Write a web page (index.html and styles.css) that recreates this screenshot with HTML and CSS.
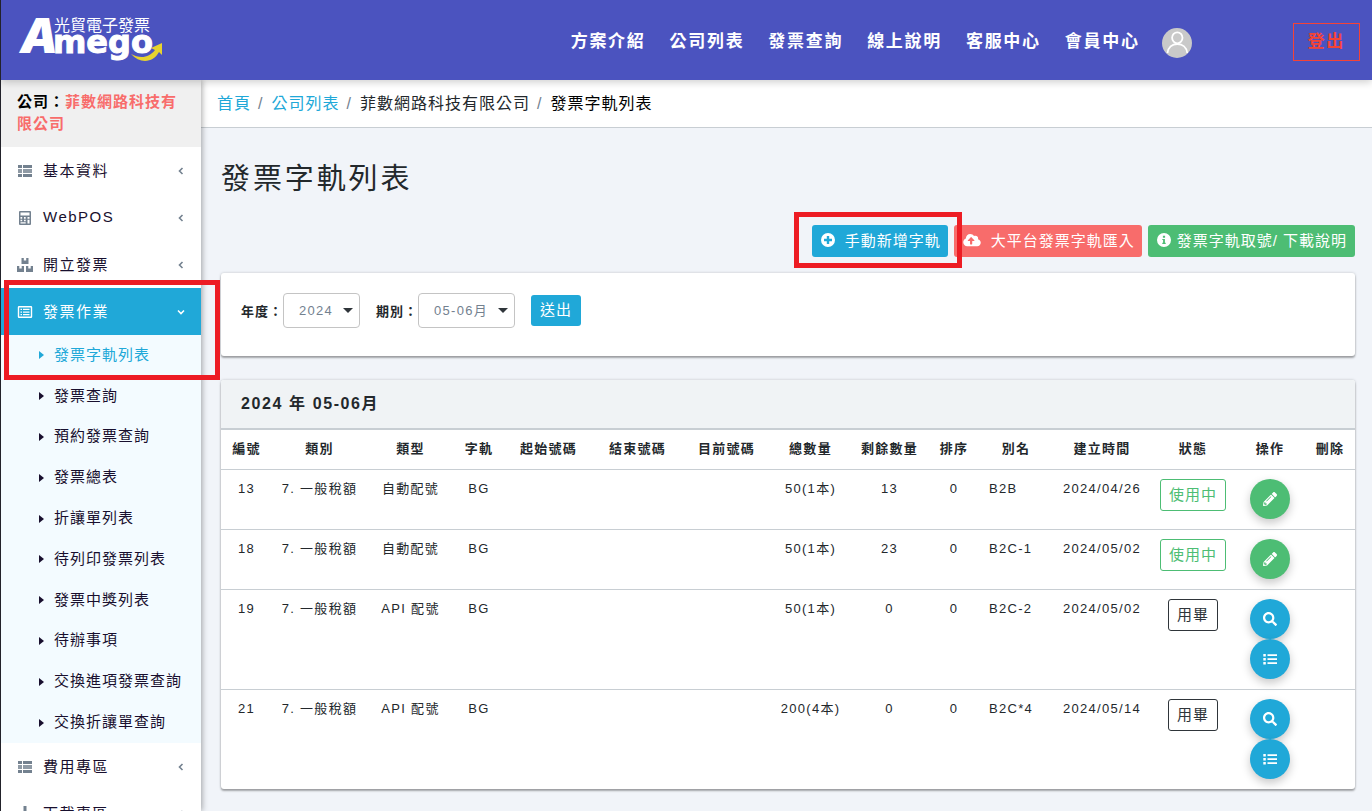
FILE: index.html
```html
<!DOCTYPE html>
<html lang="zh-Hant">
<head>
<meta charset="utf-8">
<meta name="viewport" content="width=device-width, initial-scale=1">
<title>發票字軌列表</title>
<link rel="stylesheet" href="styles.css">
</head>
<body>
<svg class="sprite" aria-hidden="true">
  <symbol id="i-rows" viewBox="0 0 16 16"><path d="M1 2h4v3H1zM6 2h9v3H6zM1 11h4v3H1zM6 11h9v3H6z"/><path d="M1 6h4v4H1zM6 6h9v4H6z" opacity=".8"/></symbol>
  <symbol id="i-calc" viewBox="0 0 16 16"><path fill-rule="evenodd" d="M3 1h10a1 1 0 0 1 1 1v12a1 1 0 0 1-1 1H3a1 1 0 0 1-1-1V2a1 1 0 0 1 1-1zM3.500 2.500v3h9v-3zM3.500 7v1.700h1.700V7zM7 7v1.700h1.700V7zM10.500 7v1.700h2V7zM3.500 9.700v1.500h1.700V9.700zM7 9.700v1.500h1.700V9.700zM3.500 12.200v1.300h5.200v-1.300zM10.500 9.700v3.800h2V9.700z"/></symbol>
  <symbol id="i-boxes" viewBox="0 0 16 16"><path d="M4.500 1h2.300v2.500h2.400V1h2.300v6h-7zM0 9h2.300v2.500h2.400V9H7v6H0zM9 9h2.300v2.500h2.400V9H16v6H9z"/></symbol>
  <symbol id="i-listalt" viewBox="0 0 16 16"><path fill-rule="evenodd" d="M2 2h12a1.200 1.200 0 0 1 1.200 1.200v9.600A1.200 1.200 0 0 1 14 14H2a1.200 1.200 0 0 1-1.200-1.200V3.200A1.200 1.200 0 0 1 2 2zM2.200 3.400v9.200h11.600V3.400zM3.500 4.700H5V6H3.500zM6 4.700h6.500V6H6zM3.500 7.400H5v1.300H3.500zM6 7.400h6.500v1.300H6zM3.500 10H5v1.300H3.500zM6 10h6.500v1.300H6z"/></symbol>
  <symbol id="i-download" viewBox="0 0 16 16"><path d="M6.500 0h3v6H13l-5 5-5-5h3.500zM0 11h4l4 3 4-3h4v5H0z"/></symbol>
  <symbol id="i-pencil" viewBox="0 0 512 512"><path d="M497.900 142.100l-46.100 46.100c-4.700 4.700-12.300 4.700-17 0l-111-111c-4.700-4.700-4.700-12.300 0-17l46.100-46.100c18.700-18.700 49.100-18.700 67.900 0l60.100 60.100c18.800 18.700 18.800 49.100 0 67.900zM284.200 99.800L21.600 362.400.4 483.900c-2.900 16.400 11.400 30.600 27.800 27.800l121.500-21.300 262.600-262.600c4.700-4.700 4.700-12.300 0-17l-111-111c-4.800-4.700-12.400-4.700-17.100 0zM124.100 339.900c-5.500-5.500-5.500-14.300 0-19.800l154-154c5.500-5.500 14.300-5.500 19.800 0s5.500 14.300 0 19.800l-154 154c-5.500 5.500-14.300 5.500-19.800 0zM88 424h48v36.300l-64.500 11.300-31.100-31.100L51.700 376H88v48z"/></symbol>
  <symbol id="i-search" viewBox="0 0 512 512"><path d="M505 442.700L405.300 343c-4.500-4.500-10.600-7-17-7H372c27.600-35.300 44-79.700 44-128C416 93.100 322.900 0 208 0S0 93.100 0 208s93.100 208 208 208c48.300 0 92.700-16.400 128-44v16.300c0 6.400 2.500 12.500 7 17l99.700 99.700c9.400 9.400 24.600 9.400 33.900 0l28.300-28.300c9.400-9.400 9.400-24.600.1-34zM208 336c-70.700 0-128-57.200-128-128 0-70.700 57.200-128 128-128 70.700 0 128 57.200 128 128 0 70.700-57.200 128-128 128z"/></symbol>
  <symbol id="i-list" viewBox="0 0 14 14"><path d="M.3 2h2.500v2.500H.3zM.3 6h2.500v2.500H.3zM.3 10h2.500v2.500H.3zM4.500 2.300H14v1.800H4.500zM4.500 6.300H14v1.800H4.500zM4.500 10.300H14v1.800H4.500z"/></symbol>
  <symbol id="i-plus" viewBox="0 0 14 14"><path fill-rule="evenodd" d="M7 0a7 7 0 1 1 0 14A7 7 0 0 1 7 0zM5.800 3v2.800H3v2.400h2.800V11h2.400V8.200H11V5.800H8.200V3z"/></symbol>
  <symbol id="i-info" viewBox="0 0 14 14"><path fill-rule="evenodd" d="M7 0a7 7 0 1 1 0 14A7 7 0 0 1 7 0zM5.900 2.700v2.100h2.200V2.700zM5.300 5.900v1.200h.8v2.600h-.8v1.200h3.400V9.700h-.8V5.900z"/></symbol>
  <symbol id="i-cloud" viewBox="0 0 640 512"><path d="M537.600 226.600c4.100-10.700 6.400-22.400 6.400-34.600 0-53-43-96-96-96-19.700 0-38.100 6-53.300 16.200C367 64.200 315.300 32 256 32c-88.400 0-160 71.600-160 160 0 2.700.1 5.400.2 8.100C40.200 219.800 0 273.200 0 336c0 79.500 64.500 144 144 144h368c70.700 0 128-57.300 128-128 0-61.900-44-113.600-102.400-125.400zM393.400 288H328v112c0 8.800-7.200 16-16 16h-48c-8.800 0-16-7.200-16-16V288h-65.400c-14.300 0-21.400-17.200-11.300-27.300l105.400-105.400c6.200-6.200 16.400-6.200 22.600 0l105.400 105.400c10.100 10.100 2.900 27.300-11.300 27.300z"/></symbol>
  <symbol id="i-left" viewBox="0 0 8 8"><path d="M5.500 1 2.500 4l3 3" fill="none" stroke="currentColor" stroke-width="1.600"/></symbol>
  <symbol id="i-down" viewBox="0 0 8 8"><path d="M1 2.500l3 3 3-3" fill="none" stroke="currentColor" stroke-width="1.600"/></symbol>
</svg>

<header class="topbar">
  <a class="logo" href="#" aria-label="光貿電子發票 Amego">
    <svg width="146" height="52" viewBox="0 0 146 52">
      <text class="logo-a" x="1" y="37">A</text>
      <text class="logo-word" x="34" y="37">mego</text>
      <text class="logo-sub" x="35" y="15">光貿電子發票</text>
      <path d="M112 38c9 5 18 4 24-4l-4-2 11-5v12l-3-3c-6 11-19 12-28 2z" fill="#e8d32e"/>
    </svg>
  </a>
  <nav class="topnav">
    <a href="#">方案介紹</a><a href="#">公司列表</a><a href="#">發票查詢</a><a href="#">線上說明</a><a href="#">客服中心</a><a href="#">會員中心</a>
  </nav>
  <a class="avatar" href="#" aria-label="會員">
    <svg width="30" height="30" viewBox="0 0 30 30"><circle cx="15" cy="15" r="15" fill="#c9c9c9"/><g fill="none" stroke="#fff" stroke-width="1.800"><ellipse cx="15.300" cy="9.800" rx="5.200" ry="5.500"/><path d="M5.500 25c.5-5.500 4.500-9 9.800-9s9.300 3.500 10 9"/></g></svg>
  </a>
  <button class="logout" type="button">登出</button>
</header>

<div class="shell">
  <aside class="sidebar">
    <div class="company">公司：<span>菲數網路科技有限公司</span></div>
    <nav>
      <a class="item" href="#"><svg><use href="#i-rows"/></svg><span>基本資料</span><svg class="chev"><use href="#i-left"/></svg></a>
      <a class="item" href="#"><svg><use href="#i-calc"/></svg><span>WebPOS</span><svg class="chev"><use href="#i-left"/></svg></a>
      <a class="item" href="#"><svg><use href="#i-boxes"/></svg><span>開立發票</span><svg class="chev"><use href="#i-left"/></svg></a>
      <div class="group">
        <a class="item open" href="#"><svg><use href="#i-listalt"/></svg><span>發票作業</span><svg class="chev"><use href="#i-down"/></svg></a>
        <div class="submenu">
          <a class="current" href="#"><span>發票字軌列表</span></a>
          <a href="#"><span>發票查詢</span></a>
          <a href="#"><span>預約發票查詢</span></a>
          <a href="#"><span>發票總表</span></a>
          <a href="#"><span>折讓單列表</span></a>
          <a href="#"><span>待列印發票列表</span></a>
          <a href="#"><span>發票中獎列表</span></a>
          <a href="#"><span>待辦事項</span></a>
          <a href="#"><span>交換進項發票查詢</span></a>
          <a href="#"><span>交換折讓單查詢</span></a>
        </div>
        <div class="mark mark-menu"></div>
      </div>
      <a class="item" href="#"><svg><use href="#i-rows"/></svg><span>費用專區</span><svg class="chev"><use href="#i-left"/></svg></a>
      <a class="item" href="#"><svg><use href="#i-download"/></svg><span>下載專區</span><svg class="chev"><use href="#i-left"/></svg></a>
    </nav>
  </aside>

  <main class="main">
    <nav class="crumbs">
      <a href="#">首頁</a><i>/</i><a href="#">公司列表</a><i>/</i><span>菲數網路科技有限公司</span><i>/</i><b>發票字軌列表</b>
    </nav>
    <div class="content">
      <h1>發票字軌列表</h1>
      <div class="actions">
        <div class="marked">
          <button class="btn blue" type="button"><svg width="14" height="14"><use href="#i-plus"/></svg><span>手動新增字軌</span></button>
          <div class="mark mark-button"></div>
        </div>
        <button class="btn red" type="button"><svg width="18" height="14"><use href="#i-cloud"/></svg><span>大平台發票字軌匯入</span></button>
        <button class="btn green" type="button"><svg width="14" height="14"><use href="#i-info"/></svg><span>發票字軌取號/ 下載說明</span></button>
      </div>

      <form class="card filter">
        <label for="year">年度：</label>
        <span class="select year"><select id="year"><option>2024</option></select></span>
        <label for="period">期別：</label>
        <span class="select period"><select id="period"><option>05-06月</option></select></span>
        <button class="btn blue submit" type="button"><span>送出</span></button>
      </form>

      <section class="card">
        <h2>2024 年 05-06月</h2>
        <table>
          <colgroup><col class="w51"><col class="w95"><col class="w87"><col class="w50"><col class="w89"><col class="w89"><col class="w89"><col class="w79"><col class="w79"><col class="w50"><col class="w74"><col class="w98"><col class="w84"><col class="w70"><col class="w50"></colgroup>
          <thead><tr><th>編號</th><th>類別</th><th>類型</th><th>字軌</th><th>起始號碼</th><th>結束號碼</th><th>目前號碼</th><th>總數量</th><th>剩餘數量</th><th>排序</th><th>別名</th><th>建立時間</th><th>狀態</th><th>操作</th><th>刪除</th></tr></thead>
          <tbody>
            <tr><td>13</td><td>7. 一般稅額</td><td>自動配號</td><td>BG</td><td></td><td></td><td></td><td>50(1本)</td><td>13</td><td>0</td><td class="alias">B2B</td><td>2024/04/26</td><td><button class="status active" type="button">使用中</button></td><td><button class="round green" type="button" aria-label="編輯"><svg><use href="#i-pencil"/></svg></button></td><td></td></tr>
            <tr><td>18</td><td>7. 一般稅額</td><td>自動配號</td><td>BG</td><td></td><td></td><td></td><td>50(1本)</td><td>23</td><td>0</td><td class="alias">B2C-1</td><td>2024/05/02</td><td><button class="status active" type="button">使用中</button></td><td><button class="round green" type="button" aria-label="編輯"><svg><use href="#i-pencil"/></svg></button></td><td></td></tr>
            <tr><td>19</td><td>7. 一般稅額</td><td>API 配號</td><td>BG</td><td></td><td></td><td></td><td>50(1本)</td><td>0</td><td>0</td><td class="alias">B2C-2</td><td>2024/05/02</td><td><button class="status" type="button">用畢</button></td><td><button class="round blue" type="button" aria-label="檢視"><svg><use href="#i-search"/></svg></button><button class="round blue" type="button" aria-label="明細"><svg><use href="#i-list"/></svg></button></td><td></td></tr>
            <tr><td>21</td><td>7. 一般稅額</td><td>API 配號</td><td>BG</td><td></td><td></td><td></td><td>200(4本)</td><td>0</td><td>0</td><td class="alias">B2C*4</td><td>2024/05/14</td><td><button class="status" type="button">用畢</button></td><td><button class="round blue" type="button" aria-label="檢視"><svg><use href="#i-search"/></svg></button><button class="round blue" type="button" aria-label="明細"><svg><use href="#i-list"/></svg></button></td><td></td></tr>
          </tbody>
        </table>
      </section>
    </div>
  </main>
</div>
</body>
</html>
```
FILE: styles.css
```css
* { box-sizing: border-box; letter-spacing: .1em; }
body {
  margin: 0;
  height: 100vh;
  overflow: hidden;
  display: flex;
  flex-direction: column;
  border-left: 1px solid #22222a;
  background: #f1f4f9;
  color: #23282c;
  font-family: "Liberation Sans", "Noto Sans CJK TC", sans-serif;
  font-size: 13px;
}
a { text-decoration: none; color: inherit; }
button, select { font-family: inherit; margin: 0; }
svg { fill: currentColor; flex: none; }
.sprite { position: absolute; width: 0; height: 0; }

.topbar {
  position: relative;
  z-index: 3;
  flex: none;
  height: 80px;
  display: flex;
  align-items: center;
  padding: 4px 12px 0 18px;
  background: #4b53bf;
  box-shadow: 0 2px 8px rgba(0, 0, 0, .2);
}
.logo { margin-right: auto; height: 52px; color: #fff; }
.logo svg { overflow: visible; }
.logo text { letter-spacing: 0; }
.logo-a { font: italic 900 48px Inter, sans-serif; }
.logo-word { font: 700 32px "DejaVu Sans", sans-serif; stroke: #fff; stroke-width: 1px; }
.logo-sub { font: 400 16px "Noto Sans CJK TC", sans-serif; }
.topnav { display: flex; gap: 24px; color: #fff; font-size: 17px; font-weight: 700; line-height: 24px; }
.avatar { height: 30px; margin: 2px 101px 0 22px; }
.logout {
  height: 38px;
  padding: 0 14px 6px;
  border: 1px solid #f44336;
  background: none;
  color: #f44336;
  font-size: 17px;
  font-weight: 700;
}

.shell { flex: 1; min-height: 0; display: flex; }
.sidebar {
  position: relative;
  z-index: 2;
  flex: none;
  width: 200px;
  background: #fff;
  box-shadow: 1px 0 6px rgba(0, 0, 0, .35);
  color: #180f2e;
}
.company {
  padding: 11px 16px 12px;
  background: #f0f0f0;
  color: #000;
  font-size: 15px;
  font-weight: 700;
  line-height: 22px;
  letter-spacing: 1px;
}
.company span { color: #f86c6b; letter-spacing: 1px; }
.item { display: flex; align-items: center; gap: 10px; height: 47px; padding: 0 16px; font-size: 15px; }
.item span { padding-bottom: 2px; }
.item svg { width: 16px; height: 16px; color: #73818f; }
.item .chev { width: 8px; height: 8px; margin-left: auto; }
.item.open { background: #20a8d8; color: #fff; }
.item.open svg { color: #fff; }
.group { position: relative; }
.submenu { display: grid; grid-auto-rows: 1fr; min-height: 408px; background: #f3fbff; font-size: 15px; }
.submenu a { display: flex; align-items: center; gap: 10px; padding-left: 38px; white-space: nowrap; }
.submenu span { padding-bottom: 4px; letter-spacing: 1px; }
.submenu a::before { content: ""; border: 4px solid transparent; border-left: 5px solid currentColor; border-right: 0; }
.submenu .current { color: #20a8d8; }

.mark { position: absolute; z-index: 5; border: 5px solid #ed1c24; pointer-events: none; }
.mark-menu { top: -8px; left: 3px; right: -19px; height: 100px; }
.mark-button { top: -13px; right: -14px; bottom: -11px; left: -18px; }

.main { flex: 1; min-width: 0; }
.crumbs {
  display: flex;
  height: 48px;
  padding: 0 16px;
  border-bottom: 1px solid #c8ced3;
  background: #fff;
  font-size: 16px;
  line-height: 48px;
}
.crumbs * { letter-spacing: 1px; font-weight: 400; }
.crumbs a { color: #20a8d8; }
.crumbs b { color: #000; }
.crumbs i { padding: 0 8px 0 7px; color: #73818f; font-style: normal; }
.content { padding: 28px 17px 0 20px; }
h1 { margin: 0 0 23px; font-size: 29px; font-weight: 400; line-height: 46px; }
.actions { display: flex; justify-content: flex-end; gap: 6px; margin-bottom: 16px; }
.marked { position: relative; }
.btn {
  display: flex;
  align-items: center;
  gap: 10px;
  height: 32px;
  padding: 0 7px 2px 9px;
  border: 0;
  border-radius: 3px;
  color: #fff;
  font-size: 15px;
  white-space: nowrap;
}
.btn span { padding-bottom: 2px; letter-spacing: 1px; }
.blue { background: #20a8d8; }
.red { background: #f86c6b; }
.green { background: #4dbd74; }
.btn.green { gap: 6px; padding-right: 8px; }

.card {
  overflow: hidden;
  margin-bottom: 24px;
  border-radius: 3px;
  background: #fff;
  box-shadow: 0 2px 2px rgba(0, 0, 0, .3), 0 0 3px rgba(0, 0, 0, .2);
}
.filter { display: flex; align-items: center; padding: 20px 20px 28px; }
.filter label { font-weight: 700; letter-spacing: 1px; white-space: nowrap; }
.select { position: relative; margin-right: 16px; }
.select::after {
  content: "";
  position: absolute;
  top: 15px;
  right: 7px;
  border: 5px solid transparent;
  border-top-color: #2f353a;
  border-bottom: 0;
  pointer-events: none;
}
.select select {
  appearance: none;
  width: 100%;
  height: 35px;
  padding: 0 15px;
  border: 1px solid #c4c4c4;
  border-radius: 4px;
  background: #fff;
  color: #73818f;
  font-size: 13px;
}
.year { width: 77px; }
.period { width: 97px; }
.btn.submit { height: 31px; padding-right: 9px; }

h2 {
  margin: 0;
  padding: 0 20px;
  border-bottom: 2px solid #c8ced3;
  background: #f0f3f5;
  font-size: 16px;
  line-height: 48px;
}
table { width: 100%; table-layout: fixed; border-collapse: separate; border-spacing: 0; }
th { height: 39px; padding: 0 0 4px; text-align: center; white-space: nowrap; }
td { padding: 9px 0 10px; border-top: 1px solid #c8ced3; text-align: center; vertical-align: top; line-height: 20px; white-space: nowrap; }
td.alias { padding-left: 10px; text-align: left; }
.w50 { width: 50px; } .w51 { width: 51px; } .w70 { width: 70px; }
.w74 { width: 74px; } .w79 { width: 79px; } .w84 { width: 84px; } .w87 { width: 87px; }
.w89 { width: 89px; } .w95 { width: 95px; } .w98 { width: 98px; }
.status {
  height: 32px;
  padding: 0 8px 4px;
  border: 1px solid #2f353a;
  border-radius: 3px;
  background: none;
  color: #2f353a;
  font-size: 15px;
  letter-spacing: 1px;
}
.status.active { border-color: #4dbd74; color: #4dbd74; }
.round {
  display: flex;
  align-items: center;
  justify-content: center;
  width: 40px;
  height: 40px;
  margin: 0 auto;
  padding: 0;
  border: 0;
  border-radius: 50%;
  color: #fff;
  box-shadow: 0 4px 10px rgba(0, 0, 0, .22);
}
.round svg { width: 14px; height: 14px; }
```
